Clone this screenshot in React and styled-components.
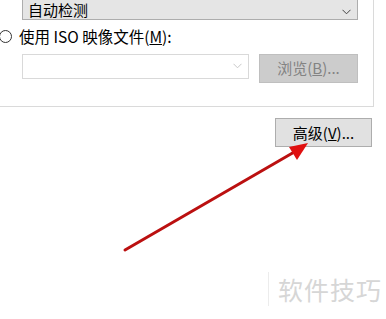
import React from "react";
import styled, { createGlobalStyle } from "styled-components";

const Global = createGlobalStyle`
  html, body {
    margin: 0;
    padding: 0;
    background: #ffffff;
  }
  body {
    font-family: "Noto Sans CJK SC", "Noto Sans", sans-serif;
  }
`;

const Page = styled.div`
  position: relative;
  width: 386px;
  height: 319px;
  overflow: hidden;
  background: #ffffff;
  color: #000;
  font-size: 14.5px;
`;

const Panel = styled.div`
  box-sizing: border-box;
  width: 374px;
  height: 107px;
  border-right: 1px solid #dadada;
  border-bottom: 1px solid #dadada;
  padding-top: 1px;
`;

const Combo = styled.div`
  box-sizing: border-box;
  display: flex;
  align-items: center;
  justify-content: space-between;
  width: ${(p) => p.$w}px;
  height: ${(p) => p.$h}px;
  margin-left: ${(p) => p.$ml || 0}px;
  margin-top: ${(p) => p.$mt || 0}px;
  padding: 0 6px 0 5px;
  background: ${(p) => (p.$disabled ? "#ffffff" : "#e5e5e5")};
  border: 1px solid ${(p) => (p.$disabled ? "#d9d9d9" : "#adadad")};
  line-height: 1;
`;

const ComboText = styled.span`
  margin-top: 3px;
  font-size: 15px;
`;

const Chevron = ({ color }) => (
  <svg width="9" height="6" viewBox="0 0 9 6">
    <path d="M0.5 0.8 L4.5 4.8 L8.5 0.8" fill="none" stroke={color} strokeWidth="1" />
  </svg>
);

const RadioRow = styled.div`
  display: flex;
  align-items: center;
  gap: 7px;
  margin-top: 9px;
  margin-left: -1px;
  line-height: 1;
  font-size: 15.5px;
`;

const RadioCircle = styled.span`
  box-sizing: border-box;
  width: 13px;
  height: 13px;
  border-radius: 50%;
  border: 1px solid #333333;
  background: #fff;
`;

const FileRow = styled.div`
  display: flex;
  align-items: flex-start;
  gap: 10px;
  margin-left: 22px;
  margin-top: 9px;
`;

const Button = styled.div`
  box-sizing: border-box;
  display: flex;
  align-items: center;
  justify-content: center;
  width: ${(p) => p.$w}px;
  height: 29px;
  background: ${(p) => (p.$disabled ? "#cccccc" : "#e1e1e1")};
  border: 1px solid ${(p) => (p.$disabled ? "#bfbfbf" : "#adadad")};
  color: ${(p) => (p.$disabled ? "#838383" : "#000000")};
  line-height: 1;
  padding-bottom: 1px;
  font-size: 15px;
`;

const ButtonRow = styled.div`
  display: flex;
  justify-content: flex-end;
  padding-right: 14px;
  margin-top: 11px;
`;

const Watermark = styled.div`
  position: absolute;
  left: 268px;
  top: 272px;
  display: flex;
  align-items: center;
  gap: 9px;
  color: #d6d6d6;
  font-size: 25px;
  letter-spacing: 1px;
  line-height: 1;
`;

const WatermarkBar = styled.span`
  width: 1px;
  height: 34px;
  background: #ececec;
`;

const Arrow = styled.svg`
  position: absolute;
  left: 0;
  top: 0;
  pointer-events: none;
`;

export default function App() {
  return (
    <Page>
      <Global />
      <Panel>
        <Combo $w={336} $h={24} $ml={22} $mt={-5}>
          <ComboText>自动检测</ComboText>
          <span style={{ marginTop: 3 }}>
            <Chevron color="#444" />
          </span>
        </Combo>
        <RadioRow>
          <RadioCircle />
          <span>
            使用 ISO 映像文件(<u>M</u>):
          </span>
        </RadioRow>
        <FileRow>
          <Combo $w={227} $h={25} $disabled>
            <span />
            <Chevron color="#c8c8c8" />
          </Combo>
          <Button $w={99} $disabled>
            浏览(<u>B</u>)...
          </Button>
        </FileRow>
      </Panel>
      <ButtonRow>
        <Button $w={97}>
          高级(<u>V</u>)...
        </Button>
      </ButtonRow>
      <Watermark>
        <WatermarkBar />
        <span>软件技巧</span>
      </Watermark>
      <Arrow width="386" height="319" viewBox="0 0 386 319">
        <line x1="125" y1="250" x2="296" y2="151" stroke="#bb1010" strokeWidth="3" strokeLinecap="round" />
        <polygon points="308,143 289,147 297,160" fill="#e01010" />
      </Arrow>
    </Page>
  );
}
